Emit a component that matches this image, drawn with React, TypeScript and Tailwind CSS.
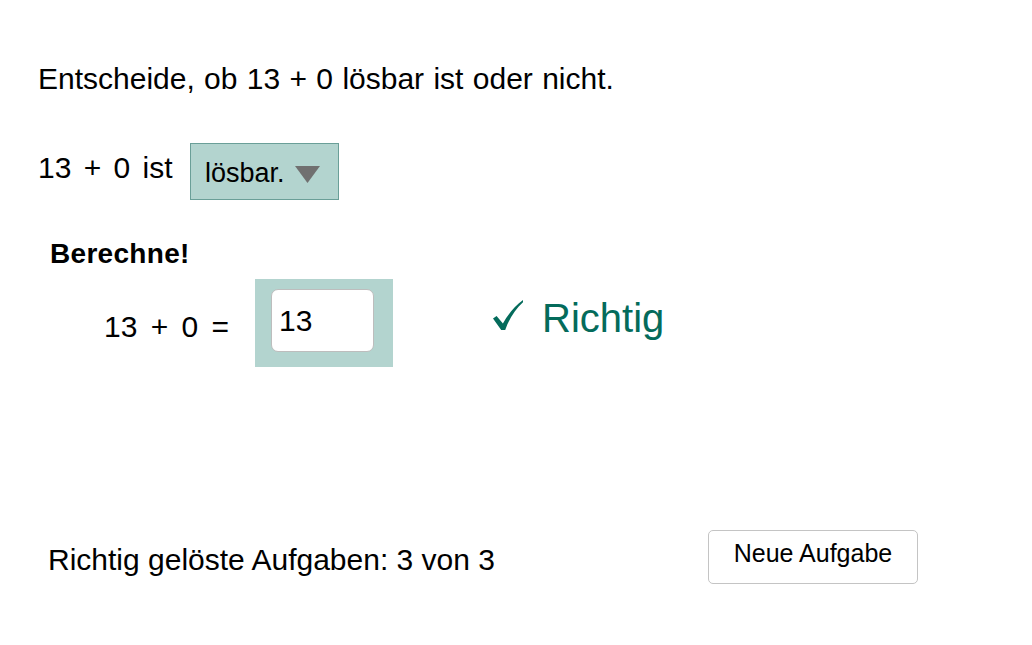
import React from "react";

function Check() {
  return (
    <svg width="30" height="30" viewBox="0 0 30 30" className="block">
      <path
        d="M0 18.6 L3.6 16 L9.9 23.6 C14.6 15 21 6.6 30 0 L30 2.3 C22.6 9 16.2 18.4 12.2 30 L8.2 30 Z"
        fill="#046b5b"
      />
    </svg>
  );
}

export default function App() {
  return (
    <div className="min-h-[645px] w-full bg-white text-black font-['Liberation_Sans',Arial,sans-serif]">
      <div className="pt-[61px] pl-[38px]">
        <p className="text-[30px] leading-[36px] [word-spacing:1px]">
          Entscheide, ob 13 + 0 lösbar ist oder nicht.
        </p>

        <div className="mt-[46px] flex items-start">
          <span className="w-[135px] shrink-0 pt-[7px] text-[30px] leading-[36px] [word-spacing:4px]">
            13 + 0 ist
          </span>
          <div className="ml-[17px] flex h-[57px] w-[149px] items-center border-[1.5px] border-[#6a9f98] bg-[#b3d4cf] pl-[14px]">
            <span className="pt-[2px] text-[27px] leading-[30px]">lösbar.</span>
            <svg width="25" height="17" viewBox="0 0 25 17" className="ml-[10px] mt-[6px]">
              <polygon points="0,0 25,0 12.5,17" fill="#707070" />
            </svg>
          </div>
        </div>
      </div>

      <div className="pl-[50px]">
        <p className="mt-[38px] text-[28px] font-bold leading-[32px] tracking-[0.3px]">Berechne!</p>

        <div className="mt-[9px] flex items-start">
          <span className="ml-[54px] mt-[30px] w-[151px] shrink-0 text-[30px] leading-[36px] [word-spacing:5px]">
            13 + 0 =
          </span>
          <div className="h-[88px] w-[138px] shrink-0 bg-[#b3d4cf] pl-[16px] pt-[10px]">
            <input
              readOnly
              value="13"
              className="block h-[63px] w-[103px] rounded-[7px] border border-[#bdbdbd] bg-white pl-[7px] text-[30px] text-black outline-none font-['Liberation_Sans',Arial,sans-serif]"
            />
          </div>
          <div className="ml-[100px] flex items-start text-[#046b5b]">
            <div className="mt-[21px]">
              <Check />
            </div>
            <span className="ml-[19px] mt-[15px] text-[40px] leading-[48px]">Richtig</span>
          </div>
        </div>
      </div>

      <div className="mt-[163px] flex w-[918px] items-start justify-between pl-[48px]">
        <span className="mt-[12px] text-[30px] leading-[36px]">
          Richtig gelöste Aufgaben: 3 von 3
        </span>
        <button className="flex h-[54px] w-[210px] items-center justify-center rounded-[5px] border border-[#c4c4c4] bg-white pb-[9px] text-[25px] leading-[30px] text-black">
          Neue Aufgabe
        </button>
      </div>
    </div>
  );
}
